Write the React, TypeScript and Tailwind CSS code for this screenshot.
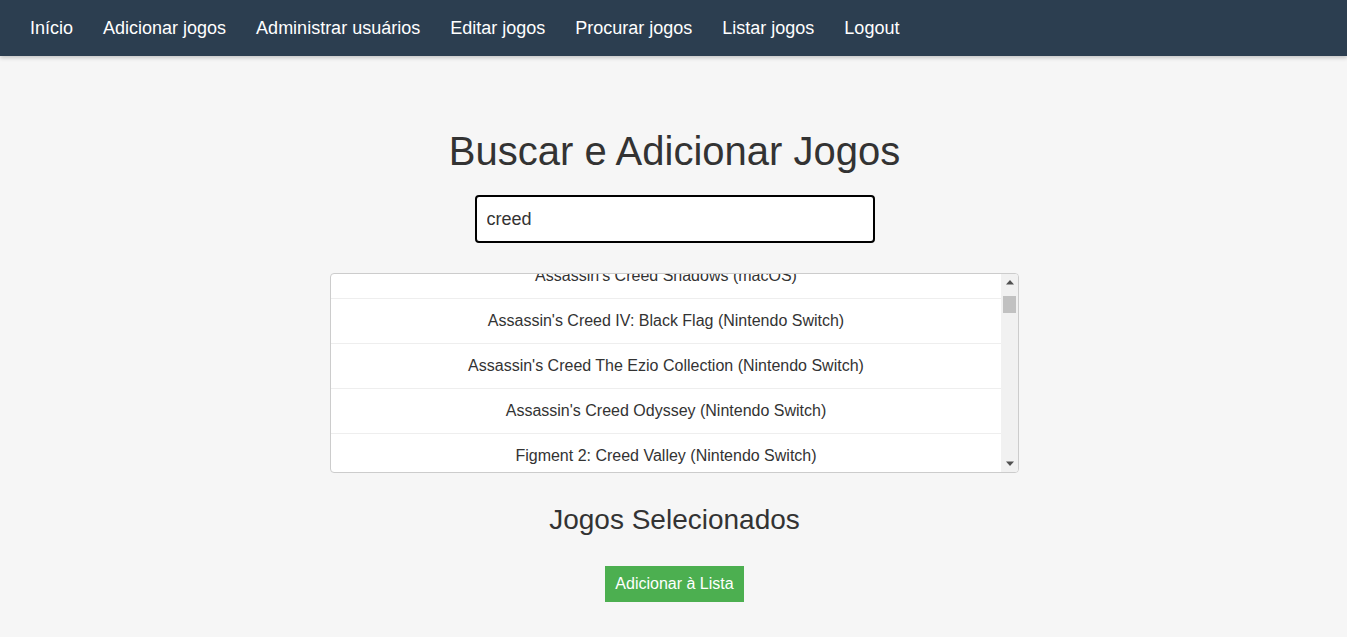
import { useEffect, useRef } from 'react';

const NAV = ['Início', 'Adicionar jogos', 'Administrar usuários', 'Editar jogos', 'Procurar jogos', 'Listar jogos', 'Logout'];

const GAMES = [
  "Assassin's Creed Shadows (PC)",
  "Assassin's Creed Shadows (macOS)",
  "Assassin's Creed IV: Black Flag (Nintendo Switch)",
  "Assassin's Creed The Ezio Collection (Nintendo Switch)",
  "Assassin's Creed Odyssey (Nintendo Switch)",
  'Figment 2: Creed Valley (Nintendo Switch)',
  "Assassin's Creed III Remastered (Nintendo Switch)",
  "Assassin's Creed Rogue Remastered (Nintendo Switch)",
  "Assassin's Creed Valhalla (PC)",
  "Assassin's Creed Valhalla (PlayStation 5)",
  "Assassin's Creed Valhalla (Xbox Series X|S)",
  "Assassin's Creed Mirage (PC)",
  "Assassin's Creed Mirage (PlayStation 5)",
  "Assassin's Creed Mirage (Xbox Series X|S)",
  "Assassin's Creed Origins (PC)",
  "Assassin's Creed Origins (PlayStation 4)",
  "Assassin's Creed Origins (Xbox One)",
  "Assassin's Creed Syndicate (PC)",
  "Assassin's Creed Syndicate (PlayStation 4)",
  "Assassin's Creed Unity (PC)",
  "Assassin's Creed Unity (Xbox One)",
  "Assassin's Creed Rogue (PC)",
  "Assassin's Creed Rogue (PlayStation 3)",
  "Assassin's Creed II (PC)",
  "Assassin's Creed II (PlayStation 3)",
  "Assassin's Creed Brotherhood (PC)",
  "Assassin's Creed Revelations (PC)",
  "Assassin's Creed (PC)",
  "Assassin's Creed (Xbox 360)",
  "Assassin's Creed Chronicles: China (PC)",
  "Assassin's Creed Chronicles: India (PC)",
  "Assassin's Creed Chronicles: Russia (PC)",
  "Assassin's Creed Liberation HD (PC)",
  "Assassin's Creed Freedom Cry (PC)",
  'Creed: Rise to Glory (PC)',
  'Creed: Rise to Glory (PlayStation 4)',
  'Figment 2: Creed Valley (PC)',
  'Figment 2: Creed Valley (PlayStation 4)',
  'Figment 2: Creed Valley (Xbox One)',
  "Assassin's Creed Nexus VR (Meta Quest)",
];

export default function App() {
  const listRef = useRef<HTMLUListElement>(null);
  const inputRef = useRef<HTMLInputElement>(null);

  useEffect(() => {
    if (listRef.current) listRef.current.scrollTop = 65;
    const el = inputRef.current;
    if (el) {
      el.focus();
      el.setSelectionRange(5, 5);
    }
  }, []);

  return (
    <div className="min-h-screen bg-[#f6f6f6] text-[#333] font-['Liberation_Sans',Arial,sans-serif]">
      <nav className="h-[56px] bg-[#2c3e50] flex items-center px-[15px] shadow-[0_2px_4px_rgba(0,0,0,0.2)]">
        {NAV.map(n => (
          <a key={n} href="#" className="px-[15px] text-[18px] text-white no-underline">{n}</a>
        ))}
      </nav>

      <main className="flex flex-col items-center pt-[72px] pl-[2px]">
        <h1 className="text-[40px] leading-[46px] font-normal">Buscar e Adicionar Jogos</h1>

        <input
          ref={inputRef}
          defaultValue="creed"
          className="mt-[21px] w-[400px] h-[48px] px-[10px] text-[18px] bg-white border-2 border-black rounded-[4px] outline-none caret-black"
        />

        {/* lista de resultados com barra de rolagem clássica */}
        <div className="relative mt-[30px] w-[689px] h-[200px] bg-white border border-[#ccc] rounded-[4px] overflow-hidden">
          <ul ref={listRef} className="h-full mr-[17px] overflow-hidden">
            {GAMES.map(g => (
              <li key={g} className="h-[45px] flex items-center justify-center border-b border-[#eee] text-[16px] text-[#333]">
                {g}
              </li>
            ))}
          </ul>
          <div className="absolute top-0 right-0 w-[17px] h-full bg-[#f1f1f1] flex flex-col items-center">
            <div className="h-[17px] flex items-center justify-center">
              <svg width="8" height="5" viewBox="0 0 8 5"><path d="M4 0L8 4.5H0Z" fill="#505050" /></svg>
            </div>
            <div className="mt-[5px] w-[13px] h-[17px] bg-[#c1c1c1]" />
            <div className="flex-1" />
            <div className="h-[17px] flex items-center justify-center">
              <svg width="8" height="5" viewBox="0 0 8 5"><path d="M0 0.5H8L4 5Z" fill="#505050" /></svg>
            </div>
          </div>
        </div>

        <h2 className="mt-[31px] text-[28px] leading-[32px] font-normal">Jogos Selecionados</h2>

        <button className="mt-[30px] h-[36px] px-[10px] bg-[#4caf50] text-white text-[16px]">
          Adicionar à Lista
        </button>
      </main>
    </div>
  );
}
